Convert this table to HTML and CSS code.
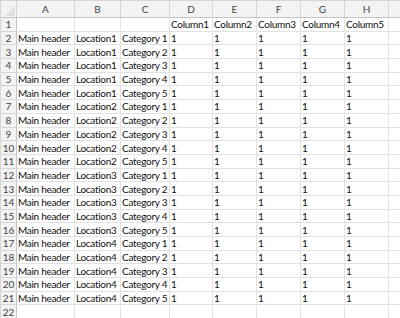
FILE: index.html
```html
<!DOCTYPE html>
<html>
<head>
<meta charset="utf-8">
<link rel="stylesheet" href="styles.css">
</head>
<body>
<table class="sheet">
<colgroup>
<col class="c-rh"><col class="c-a"><col class="c-b"><col class="c-c"><col class="c-d"><col class="c-n"><col class="c-n"><col class="c-n"><col class="c-n"><col class="c-i">
</colgroup>
<thead>
<tr class="hdr"><th class="corner"><span class="tri"></span></th><th>A</th><th>B</th><th>C</th><th>D</th><th>E</th><th>F</th><th>G</th><th>H</th><th></th></tr>
</thead>
<tbody>
<tr><th>1</th><td></td><td></td><td></td><td>Column1</td><td>Column2</td><td>Column3</td><td>Column4</td><td>Column5</td><td></td></tr>
<tr><th>2</th><td>Main header</td><td>Location1</td><td>Category 1</td><td>1</td><td>1</td><td>1</td><td>1</td><td>1</td><td></td></tr>
<tr><th>3</th><td>Main header</td><td>Location1</td><td>Category 2</td><td>1</td><td>1</td><td>1</td><td>1</td><td>1</td><td></td></tr>
<tr><th>4</th><td>Main header</td><td>Location1</td><td>Category 3</td><td>1</td><td>1</td><td>1</td><td>1</td><td>1</td><td></td></tr>
<tr><th>5</th><td>Main header</td><td>Location1</td><td>Category 4</td><td>1</td><td>1</td><td>1</td><td>1</td><td>1</td><td></td></tr>
<tr><th>6</th><td>Main header</td><td>Location1</td><td>Category 5</td><td>1</td><td>1</td><td>1</td><td>1</td><td>1</td><td></td></tr>
<tr><th>7</th><td>Main header</td><td>Location2</td><td>Category 1</td><td>1</td><td>1</td><td>1</td><td>1</td><td>1</td><td></td></tr>
<tr><th>8</th><td>Main header</td><td>Location2</td><td>Category 2</td><td>1</td><td>1</td><td>1</td><td>1</td><td>1</td><td></td></tr>
<tr><th>9</th><td>Main header</td><td>Location2</td><td>Category 3</td><td>1</td><td>1</td><td>1</td><td>1</td><td>1</td><td></td></tr>
<tr><th>10</th><td>Main header</td><td>Location2</td><td>Category 4</td><td>1</td><td>1</td><td>1</td><td>1</td><td>1</td><td></td></tr>
<tr><th>11</th><td>Main header</td><td>Location2</td><td>Category 5</td><td>1</td><td>1</td><td>1</td><td>1</td><td>1</td><td></td></tr>
<tr><th>12</th><td>Main header</td><td>Location3</td><td>Category 1</td><td>1</td><td>1</td><td>1</td><td>1</td><td>1</td><td></td></tr>
<tr><th>13</th><td>Main header</td><td>Location3</td><td>Category 2</td><td>1</td><td>1</td><td>1</td><td>1</td><td>1</td><td></td></tr>
<tr><th>14</th><td>Main header</td><td>Location3</td><td>Category 3</td><td>1</td><td>1</td><td>1</td><td>1</td><td>1</td><td></td></tr>
<tr><th>15</th><td>Main header</td><td>Location3</td><td>Category 4</td><td>1</td><td>1</td><td>1</td><td>1</td><td>1</td><td></td></tr>
<tr><th>16</th><td>Main header</td><td>Location3</td><td>Category 5</td><td>1</td><td>1</td><td>1</td><td>1</td><td>1</td><td></td></tr>
<tr><th>17</th><td>Main header</td><td>Location4</td><td>Category 1</td><td>1</td><td>1</td><td>1</td><td>1</td><td>1</td><td></td></tr>
<tr><th>18</th><td>Main header</td><td>Location4</td><td>Category 2</td><td>1</td><td>1</td><td>1</td><td>1</td><td>1</td><td></td></tr>
<tr><th>19</th><td>Main header</td><td>Location4</td><td>Category 3</td><td>1</td><td>1</td><td>1</td><td>1</td><td>1</td><td></td></tr>
<tr><th>20</th><td>Main header</td><td>Location4</td><td>Category 4</td><td>1</td><td>1</td><td>1</td><td>1</td><td>1</td><td></td></tr>
<tr><th>21</th><td>Main header</td><td>Location4</td><td>Category 5</td><td>1</td><td>1</td><td>1</td><td>1</td><td>1</td><td></td></tr>
<tr><th>22</th><td></td><td></td><td></td><td></td><td></td><td></td><td></td><td></td><td></td></tr>
</tbody>
</table>
</body>
</html>
```
FILE: styles.css
```css
html, body {
  margin: 0;
  padding: 0;
  background: #ffffff;
  overflow: hidden;
}
.sheet {
  border-collapse: collapse;
  table-layout: fixed;
  width: 400px;
  font-family: Lato, "Liberation Sans", sans-serif;
  font-size: 10px;
  color: #111;
}
.c-rh { width: 16px; }
.c-a { width: 58px; }
.c-b { width: 46px; }
.c-c { width: 49px; }
.c-d { width: 43px; }
.c-n { width: 44px; }
.c-i { width: 12px; }
.sheet td, .sheet th {
  box-sizing: border-box;
  padding: 0 0 0 1px;
  height: 13.7px;
  line-height: 12px;
  border: 1px solid #e2e2e2;
  white-space: nowrap;
  overflow: visible;
  text-align: left;
  font-weight: normal;
}
.sheet td {
  letter-spacing: -0.3px;
}
.sheet tbody th {
  background: #f3f3f3;
  color: #444;
  text-align: center;
  padding: 0;
  border-color: #d6d6d6;
  border-right-color: #c6c6c6;
  font-size: 10px;
}
.hdr th {
  height: 17px;
  background: #f3f3f3;
  color: #444;
  text-align: center;
  padding: 0;
  border-color: #d6d6d6;
  border-bottom-color: #c6c6c6;
  font-size: 10px;
}
.corner {
  position: relative;
}
.tri {
  position: absolute;
  right: 1px;
  bottom: 1px;
  width: 0;
  height: 0;
  border-left: 10px solid transparent;
  border-bottom: 10px solid #dedede;
}
```
